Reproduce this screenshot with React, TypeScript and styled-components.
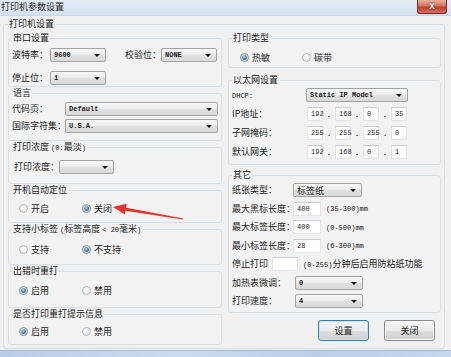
import React from "react";
import styled, { createGlobalStyle } from "styled-components";

const GlobalStyle = createGlobalStyle`
  html, body { margin: 0; padding: 0; background: #f0f0f0; }
  body {
    font-family: "Noto Sans CJK SC", "Liberation Sans", sans-serif;
    font-size: 9px;
    color: #1b1b1b;
  }
  * { box-sizing: border-box; }
`;

const Window = styled.div`
  position: relative;
  width: 451px;
  height: 357px;
  display: flex;
  flex-direction: column;
  background: #f0f0f0;
  overflow: hidden;
`;

const TitleBar = styled.div`
  height: 16px;
  flex: none;
  display: flex;
  align-items: flex-start;
  justify-content: space-between;
  background: linear-gradient(#e4edf7, #d3e1f1);
  border-bottom: 1px solid #c7d5e6;
`;

const Title = styled.span`
  padding-left: 1px;
  line-height: 14px;
  font-size: 9px;
  color: #1e1e1e;
`;

const CloseBtn = styled.div`
  width: 30px;
  height: 14px;
  margin-right: 4px;
  border: 1px solid #7a2e22;
  border-top: none;
  border-radius: 0 0 3px 3px;
  background: linear-gradient(#eab0a2, #d6705b 45%, #c2402a 55%, #d3705a);
  color: #fff;
  font: bold 10px "Liberation Sans", sans-serif;
  line-height: 12px;
  text-align: center;
  text-shadow: 0 0 2px #5a1a10;
`;

const Body = styled.div`
  flex: 1;
  padding: 2px 6px 0 3px;
`;

const BottomFrame = styled.div`
  height: 7px;
  flex: none;
  border-top: 1px solid #a9bcd0;
  background: linear-gradient(90deg, #b7cee8, #cadcf0 40%, #b9cfe8 70%, #c4d8ee);
`;

const OuterGroup = styled.fieldset`
  margin: 0;
  padding: 2px 3px 3px 4px;
  border: 1px solid #d5dfe5;
  border-radius: 3px;
  min-inline-size: 0;
`;

const Legend = styled.legend`
  padding: 0 1px;
  margin-left: 0;
  line-height: 12px;
  font-size: 9px;
`;

const Columns = styled.div`
  display: grid;
  grid-template-columns: 214px 213px;
  column-gap: 6px;
  align-items: start;
`;

const Column = styled.div`
  display: flex;
  flex-direction: column;
`;

const Group = styled.fieldset<{ $pt: number; $pb: number; $mt?: number }>`
  margin: ${(p) => p.$mt ?? 0}px 0 0 0;
  padding: ${(p) => p.$pt}px 3px ${(p) => p.$pb}px 3px;
  border: 1px solid #d7dfe6;
  border-radius: 3px;
  min-inline-size: 0;
  background: #f2f2f2;
`;

const Stack = styled.div<{ $gap: number }>`
  display: flex;
  flex-direction: column;
  gap: ${(p) => p.$gap}px;
`;

const Row = styled.div`
  display: flex;
  align-items: center;
  height: 14px;
`;

const Label = styled.span<{ $w?: number; $ml?: number }>`
  flex: none;
  width: ${(p) => (p.$w ? `${p.$w}px` : "auto")};
  margin-left: ${(p) => p.$ml ?? 0}px;
  white-space: nowrap;
  line-height: 12px;
`;

const Latin = styled.span`
  font-family: "Liberation Mono", monospace;
  font-size: 7px;
  color: #111;
`;

const Select = styled.div<{ $w?: number; $ml?: number }>`
  position: relative;
  flex: ${(p) => (p.$w ? "none" : "1")};
  width: ${(p) => (p.$w ? `${p.$w}px` : "auto")};
  margin-left: ${(p) => p.$ml ?? 0}px;
  height: 14px;
  border: 1px solid #a3a3a3;
  border-radius: 2px;
  background: linear-gradient(#f7f7f7, #ececec 50%, #e0e0e0 51%, #d9d9d9);
  padding-left: 3px;
  display: flex;
  align-items: center;
  font-family: "Liberation Mono", monospace;
  font-size: 7px;
  font-weight: bold;
  color: #1a1a1a;
  white-space: nowrap;
  &::after {
    content: "";
    position: absolute;
    right: 5px;
    top: 5px;
    border-left: 3px solid transparent;
    border-right: 3px solid transparent;
    border-top: 3px solid #111;
  }
`;

const SelectCJK = styled(Select)`
  font-family: "Noto Sans CJK SC", sans-serif;
  font-size: 9px;
  font-weight: normal;
`;

const Input = styled.div<{ $w: number }>`
  flex: none;
  width: ${(p) => p.$w}px;
  height: 14px;
  background: #fff;
  border: 1px solid #e2e3ea;
  border-top-color: #c9ccd3;
  padding-left: 3px;
  display: flex;
  align-items: center;
  font-family: "Liberation Mono", monospace;
  font-size: 7px;
  color: #1a1a1a;
`;

const Hint = styled.span`
  margin-left: 5px;
  white-space: nowrap;
  line-height: 12px;
`;

const IpDot = styled.span`
  width: 12px;
  flex: none;
  text-align: center;
  font-size: 9px;
  line-height: 12px;
`;

const RadioRow = styled.div<{ $pl: number }>`
  display: flex;
  align-items: center;
  height: 13px;
  padding-left: ${(p) => p.$pl}px;
`;

const RadioItem = styled.label<{ $w?: number }>`
  display: flex;
  align-items: center;
  gap: 3px;
  width: ${(p) => (p.$w ? `${p.$w}px` : "auto")};
  flex: none;
  line-height: 12px;
`;

const RadioCircle = styled.span<{ $on?: boolean }>`
  width: 9px;
  height: 9px;
  border-radius: 50%;
  border: 1px solid ${(p) => (p.$on ? "#7f8c97" : "#b3b6b9")};
  background: radial-gradient(circle at 40% 35%, #ffffff, #dcdfe2);
  display: flex;
  align-items: center;
  justify-content: center;
  flex: none;
  &::after {
    content: "";
    display: ${(p) => (p.$on ? "block" : "none")};
    width: 5px;
    height: 5px;
    border-radius: 50%;
    background: radial-gradient(circle at 40% 35%, #a9d6f2, #2f6ea6 70%);
  }
`;

const ButtonRow = styled.div`
  display: flex;
  justify-content: flex-end;
  gap: 15px;
  padding-right: 6px;
  margin-top: 7px;
`;

const Button = styled.div<{ $default?: boolean }>`
  width: 51px;
  height: 21px;
  border: 1px solid ${(p) => (p.$default ? "#3c7fb1" : "#8a8a8a")};
  border-radius: 3px;
  background: linear-gradient(#f4f4f4, #ebebeb 50%, #dddddd 51%, #cfcfcf);
  box-shadow: inset 0 0 0 1px ${(p) => (p.$default ? "#bfe3f8" : "#fcfcfc")};
  display: flex;
  align-items: center;
  justify-content: center;
  font-size: 9px;
`;

const Overlay = styled.svg`
  position: absolute;
  left: 0;
  top: 0;
  pointer-events: none;
`;

const Radio = ({ on, w, children }: { on?: boolean; w?: number; children: React.ReactNode }) => (
  <RadioItem $w={w}>
    <RadioCircle $on={on} />
    <span>{children}</span>
  </RadioItem>
);

const IpRow = ({ label, parts }: { label: string; parts: string[] }) => (
  <Row>
    <Label $w={75}>{label}</Label>
    {parts.map((p, i) => (
      <React.Fragment key={i}>
        {i > 0 && <IpDot>.</IpDot>}
        <Input $w={16}>{p}</Input>
      </React.Fragment>
    ))}
  </Row>
);

export default function App() {
  return (
    <>
      <GlobalStyle />
      <Window>
        <TitleBar>
          <Title>打印机参数设置</Title>
          <CloseBtn>x</CloseBtn>
        </TitleBar>
        <Body>
          <OuterGroup>
            <Legend>打印机设置</Legend>
            <Columns>
              <Column>
                <Group $pt={4} $pb={1}>
                  <Legend>串口设置</Legend>
                  <Stack $gap={9}>
                    <Row>
                      <Label $w={38}>波特率：</Label>
                      <Select $w={56}>9600</Select>
                      <Label $w={36} $ml={19}>校验位：</Label>
                      <Select $w={56}>NONE</Select>
                    </Row>
                    <Row>
                      <Label $w={38}>停止位：</Label>
                      <Select $w={56}>1</Select>
                    </Row>
                  </Stack>
                </Group>
                <Group $pt={3} $pb={7}>
                  <Legend>语言</Legend>
                  <Stack $gap={3}>
                    <Row>
                      <Label $w={53}>代码页：</Label>
                      <Select>Default</Select>
                    </Row>
                    <Row>
                      <Label $w={53}>国际字符集：</Label>
                      <Select>U.S.A.</Select>
                    </Row>
                  </Stack>
                </Group>
                <Group $pt={6} $pb={9}>
                  <Legend>
                    打印浓度 <Latin>(0:</Latin>最淡<Latin>)</Latin>
                  </Legend>
                  <Row>
                    <Label $w={45} $ml={2}>打印浓度：</Label>
                    <Select $w={55} />
                  </Row>
                </Group>
                <Group $pt={6} $pb={7}>
                  <Legend>开机自动定位</Legend>
                  <RadioRow $pl={7}>
                    <Radio w={63}>开启</Radio>
                    <Radio on>关闭</Radio>
                  </RadioRow>
                </Group>
                <Group $pt={7} $pb={8}>
                  <Legend>
                    支持小标签 <Latin>(</Latin>标签高度 <Latin>&lt; 20</Latin>毫米<Latin>)</Latin>
                  </Legend>
                  <RadioRow $pl={7}>
                    <Radio w={63}>支持</Radio>
                    <Radio on>不支持</Radio>
                  </RadioRow>
                </Group>
                <Group $pt={7} $pb={10}>
                  <Legend>出错时重打</Legend>
                  <RadioRow $pl={7}>
                    <Radio on w={63}>启用</Radio>
                    <Radio>禁用</Radio>
                  </RadioRow>
                </Group>
                <Group $pt={5} $pb={6}>
                  <Legend>是否打印重打提示信息</Legend>
                  <RadioRow $pl={7}>
                    <Radio on w={63}>启用</Radio>
                    <Radio>禁用</Radio>
                  </RadioRow>
                </Group>
              </Column>
              <Column>
                <Group $pt={7} $pb={3}>
                  <Legend>打印类型</Legend>
                  <RadioRow $pl={8}>
                    <Radio on w={62}>热敏</Radio>
                    <Radio>碳带</Radio>
                  </RadioRow>
                </Group>
                <Group $pt={2} $pb={5} $mt={6}>
                  <Legend>以太网设置</Legend>
                  <Stack $gap={5}>
                    <Row>
                      <Label $w={74}>
                        <Latin>DHCP:</Latin>
                      </Label>
                      <Select $w={102}>Static IP Model</Select>
                    </Row>
                    <IpRow label="IP地址：" parts={["192", "168", "0", "35"]} />
                    <IpRow label="子网掩码：" parts={["255", "255", "255", "0"]} />
                    <IpRow label="默认网关：" parts={["192", "168", "0", "1"]} />
                  </Stack>
                </Group>
                <Group $pt={2} $pb={4} $mt={4}>
                  <Legend>其它</Legend>
                  <Stack $gap={4.5}>
                    <Row>
                      <Label $w={61}>纸张类型：</Label>
                      <SelectCJK $w={69}>标签纸</SelectCJK>
                    </Row>
                    <Row>
                      <Label $w={61}>最大黑标长度：</Label>
                      <Input $w={28}>400</Input>
                      <Hint>
                        <Latin>(35-300)mm</Latin>
                      </Hint>
                    </Row>
                    <Row>
                      <Label $w={61}>最大标签长度：</Label>
                      <Input $w={28}>400</Input>
                      <Hint>
                        <Latin>(0-500)mm</Latin>
                      </Hint>
                    </Row>
                    <Row>
                      <Label $w={61}>最小标签长度：</Label>
                      <Input $w={28}>28</Input>
                      <Hint>
                        <Latin>(6-300)mm</Latin>
                      </Hint>
                    </Row>
                    <Row>
                      <Label $w={40}>停止打印</Label>
                      <Input $w={26} />
                      <Hint>
                        <Latin>(0-255)</Latin>分钟后启用防粘纸功能
                      </Hint>
                    </Row>
                    <Row>
                      <Label $w={63}>加热表微调：</Label>
                      <Select $w={68}>0</Select>
                    </Row>
                    <Row>
                      <Label $w={63}>打印速度：</Label>
                      <Select $w={68}>4</Select>
                    </Row>
                  </Stack>
                </Group>
                <ButtonRow>
                  <Button $default>设置</Button>
                  <Button>关闭</Button>
                </ButtonRow>
              </Column>
            </Columns>
          </OuterGroup>
        </Body>
        <BottomFrame />
        <Overlay width={451} height={357} viewBox="0 0 451 357">
          <polygon
            points="113,207 126.7,203.8 126.1,207.7 183.2,218.4 182.8,219.6 125.5,210.7 124.9,214.6"
            fill="#e8312a"
          />
        </Overlay>
      </Window>
    </>
  );
}
